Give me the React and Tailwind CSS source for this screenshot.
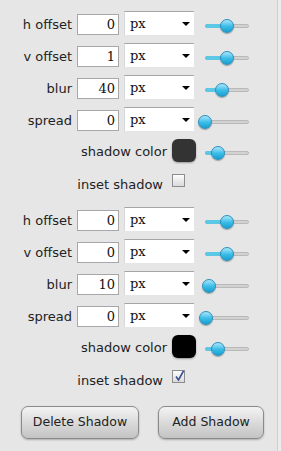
import React from 'react';

const shadows = [
  {
    fields: [
      { label: 'h offset', value: '0', pos: 22 },
      { label: 'v offset', value: '1', pos: 22 },
      { label: 'blur', value: '40', pos: 17 },
      { label: 'spread', value: '0', pos: 0 },
    ],
    color: '#333333',
    colorPos: 13,
    inset: false,
  },
  {
    fields: [
      { label: 'h offset', value: '0', pos: 22 },
      { label: 'v offset', value: '0', pos: 22 },
      { label: 'blur', value: '10', pos: 4 },
      { label: 'spread', value: '0', pos: 1 },
    ],
    color: '#000000',
    colorPos: 13,
    inset: true,
  },
];

function Slider({ pos, className }) {
  return (
    <div className={'relative w-[44px] h-[14px] shrink-0 ' + className}>
      <div className="absolute left-0 right-0 top-[5px] h-[4px] rounded-full bg-[#d2d2d2] border border-[#b9b9b9]" />
      <div
        className="absolute left-0 top-[5px] h-[4px] rounded-l-full bg-[#5cc8e6]"
        style={{ width: pos }}
      />
      <div
        className="absolute top-0 w-[14px] h-[14px] rounded-full border border-[#2a8fba] bg-gradient-to-b from-[#a6e6fb] via-[#3cbfe9] to-[#1a9ed0] shadow-[0_1px_1px_rgba(0,0,0,0.3)]"
        style={{ left: pos - 7 }}
      />
    </div>
  );
}

function Select() {
  return (
    <div className="relative ml-[5px] w-[70px] h-[24px] bg-white border-t border-[#a5a5a5] border-l border-l-[#d8d8d8] flex items-center pl-[5px] text-[13px] text-[#111] font-['DejaVu_Serif',serif]">
      px
      <svg className="absolute right-[4px] top-[10px]" width="8" height="4" viewBox="0 0 8 4">
        <path d="M0 0 H8 L4 4 Z" fill="#000" />
      </svg>
    </div>
  );
}

function FieldRow({ label, value, pos }) {
  return (
    <div className="flex h-[24px] mb-[8px]">
      <div className="w-[72px] text-right mt-[6px] leading-[16px] text-[13px] shrink-0">{label}</div>
      <div className="ml-[5px] mt-[3px] w-[42px] h-[21px] bg-white border border-[#a7a7a7] text-right pr-[3px] text-[13px] leading-[19px] font-['DejaVu_Serif',serif] text-[#111] shrink-0">
        {value}
      </div>
      <Select />
      <Slider pos={pos} className="ml-[11px] mt-[8px]" />
    </div>
  );
}

function Checkbox({ checked }) {
  return (
    <div className="ml-[9px] w-[13px] h-[13px] border border-[#8d8d8d] bg-gradient-to-b from-[#fdfdfd] to-[#dadada] relative shrink-0">
      {checked && (
        <svg className="absolute left-[1px] top-[-1px]" width="11" height="12" viewBox="0 0 11 12">
          <path d="M2 6.5 L4.5 10 L9.5 1" stroke="#3c4f8f" strokeWidth="1.6" fill="none" />
        </svg>
      )}
    </div>
  );
}

function ShadowGroup({ shadow }) {
  return (
    <div className="pb-[19px]">
      {shadow.fields.map((f) => (
        <FieldRow key={f.label} {...f} />
      ))}
      <div className="flex h-[23px] mt-[1px]">
        <div className="w-[167px] text-right mt-[5px] leading-[16px] text-[13px] shrink-0">shadow color</div>
        <div
          className="ml-[5px] w-[24px] h-[23px] rounded-[6px] shrink-0 shadow-[0_1px_2px_rgba(0,0,0,0.35)]"
          style={{ backgroundColor: shadow.color }}
        />
        <Slider pos={shadow.colorPos} className="ml-[9px] mt-[7px]" />
      </div>
      <div className="flex h-[14px] mt-[12px]">
        <div className="w-[163px] text-right mt-[3px] leading-[16px] text-[13px] shrink-0">inset shadow</div>
        <Checkbox checked={shadow.inset} />
      </div>
    </div>
  );
}

export default function App() {
  return (
    <div className="w-[281px] h-[451px] flex bg-[#e6e6e6] text-[#222] font-['DejaVu_Sans',sans-serif] overflow-hidden">
      <div className="w-[277px] pt-[11px] shrink-0">
        {shadows.map((s, i) => (
          <ShadowGroup key={i} shadow={s} />
        ))}
        <div className="flex mt-[3px]">
          <button className="ml-[21px] w-[118px] h-[33px] rounded-[7px] border border-[#8a8a8a] bg-gradient-to-b from-[#f3f3f3] to-[#c3c3c3] text-[12.5px] text-[#222] shadow-[0_1px_2px_rgba(0,0,0,0.25)]">
            Delete Shadow
          </button>
          <button className="ml-[19px] w-[106px] h-[33px] rounded-[7px] border border-[#8a8a8a] bg-gradient-to-b from-[#f3f3f3] to-[#c3c3c3] text-[12.5px] text-[#222] shadow-[0_1px_2px_rgba(0,0,0,0.25)]">
            Add Shadow
          </button>
        </div>
      </div>
      <div className="w-[1px] bg-[#cfcfcf] shrink-0" />
      <div className="flex-1 bg-[#ececec]" />
    </div>
  );
}
